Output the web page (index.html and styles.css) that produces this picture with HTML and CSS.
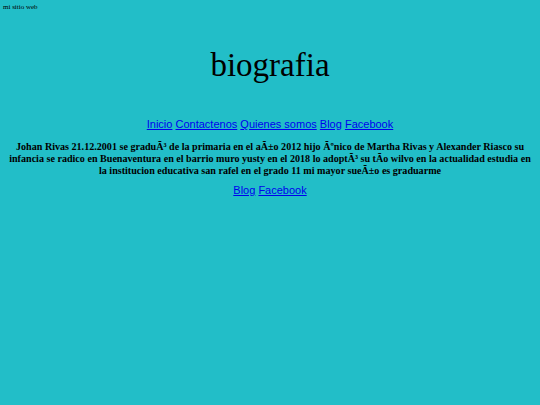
FILE: index.html
```html
<!DOCTYPE html>
<html>
<head>
<meta charset="utf-8">
<link rel="stylesheet" href="styles.css">
</head>
<body>
<header class="top">mi sitio web</header>
<h1 class="title">biografia</h1>
<nav class="nav"><a href="#">Inicio</a> <a href="#">Contactenos</a> <a href="#">Quienes somos</a> <a href="#">Blog</a> <a href="#">Facebook</a></nav>
<p class="bio">Johan Rivas 21.12.2001 se graduÃ³ de la primaria en el aÃ±o 2012 hijo Ãºnico de Martha Rivas y Alexander Riasco su infancia se radico en Buenaventura en el barrio muro yusty en el 2018 lo adoptÃ³ su tÃ&shy;o wilvo en la actualidad estudia en la institucion educativa san rafel en el grado 11 mi mayor sueÃ±o es graduarme</p>
<nav class="nav foot"><a href="#">Blog</a> <a href="#">Facebook</a></nav>
</body>
</html>
```
FILE: styles.css
```css
html, body { margin: 0; padding: 0; }
body {
  background: #22bec8;
  font-family: "Liberation Serif", serif;
  color: #000;
  padding: 3px 8px 0 8px;
  height: 402px;
  overflow: hidden;
}
.top {
  font-size: 7px;
  margin-left: -5px;
  line-height: 8px;
}
.title {
  text-align: center;
  font-weight: normal;
  font-size: 33px;
  line-height: 38px;
  margin: 35px 0 0 0;
}
.nav {
  text-align: center;
  font-family: "Liberation Sans", Arial, sans-serif;
  font-size: 11px;
  line-height: 13px;
  margin-top: 34px;
}
.nav a { color: #0000ee; }
.bio {
  text-align: center;
  font-weight: bold;
  font-size: 10.1px;
  line-height: 12px;
  margin: 10px 0 0 0;
}
.nav.foot { margin-top: 7px; }
```
